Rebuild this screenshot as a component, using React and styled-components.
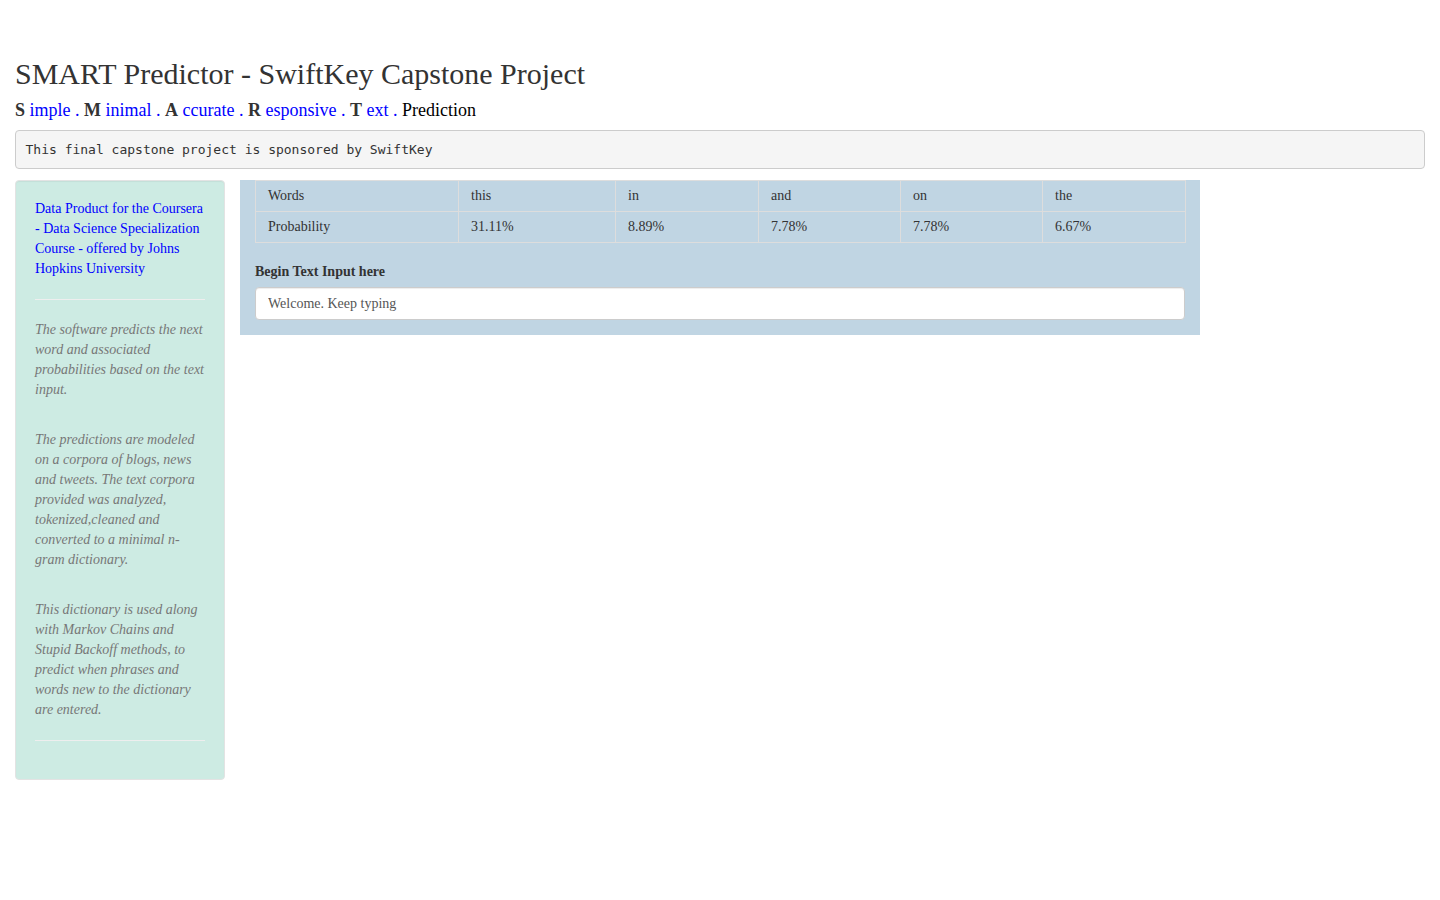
import React from 'react';
import styled, { createGlobalStyle } from 'styled-components';

const GlobalStyle = createGlobalStyle`
	* {
		box-sizing: border-box;
	}
	body {
		margin: 0;
		background: #fff;
		font-family: 'Liberation Serif', 'Times New Roman', serif;
		font-size: 14px;
		line-height: 20px;
		color: #333;
	}
`;

const Page = styled.div`
	padding: 37px 15px 0;
`;

const Title = styled.h2`
	margin: 20px 0 10px;
	font-size: 30px;
	font-weight: 400;
	line-height: 33px;
	color: #333;
`;

const Tagline = styled.div`
	font-size: 18px;
	line-height: 20px;
	color: #000;
	margin-bottom: 10px;
`;

const Initial = styled.b`
	color: #333;
`;

const Blue = styled.span`
	color: #0000ff;
`;

const Sponsor = styled.pre`
	margin: 0 0 11px;
	padding: 9.5px;
	font-family: 'DejaVu Sans Mono', 'Liberation Mono', monospace;
	font-size: 13px;
	line-height: 18px;
	color: #333;
	background: #f5f5f5;
	border: 1px solid #ccc;
	border-radius: 4px;
`;

const Row = styled.div`
	display: grid;
	grid-template-columns: 210px 960px;
	column-gap: 15px;
	align-items: start;
`;

const Sidebar = styled.div`
	background: #cdebe3;
	border: 1px solid #e3e3e3;
	border-radius: 4px;
	padding: 18px 19px 19px;
	box-shadow: inset 0 1px 1px rgba(0, 0, 0, 0.05);
`;

const SideLink = styled.a`
	display: block;
	color: #0000ff;
	text-decoration: none;
`;

const Rule = styled.hr`
	border: 0;
	border-top: 1px solid #eee;
	margin: ${(props) => props.margin || '20px 0'};
`;

const Note = styled.p`
	margin: 0 0 ${(props) => props.gap || '30px'};
	font-style: italic;
	color: #777;
`;

const Main = styled.div`
	background: #c0d5e3;
	padding: 0 15px 15px;
`;

const Table = styled.table`
	width: 100%;
	border-collapse: collapse;
	margin-bottom: 19px;
	table-layout: fixed;
`;

const Cell = styled.td`
	border: 1px solid #ddd;
	padding: 5px 12px;
	line-height: 20px;
	color: #333;
	width: ${(props) => props.width || 'auto'};
`;

const Label = styled.label`
	display: block;
	font-weight: 700;
	margin-bottom: 5px;
	color: #333;
`;

const TextInput = styled.input`
	display: block;
	width: 100%;
	height: 33px;
	padding: 6px 12px;
	font-family: inherit;
	font-size: 14px;
	color: #555;
	background: #fff;
	border: 1px solid #ccc;
	border-radius: 4px;
	box-shadow: inset 0 1px 1px rgba(0, 0, 0, 0.075);
	outline: none;
`;

const words = ['this', 'in', 'and', 'on', 'the'];
const probs = ['31.11%', '8.89%', '7.78%', '7.78%', '6.67%'];
const widths = ['157px', '143px', '142px', '142px', '143px'];

const tagParts = [
	['S', 'imple'],
	['M', 'inimal'],
	['A', 'ccurate'],
	['R', 'esponsive'],
	['T', 'ext'],
];

const App = () => {
	return (
		<Page>
			<GlobalStyle />
			<Title>SMART Predictor - SwiftKey Capstone Project</Title>
			<Tagline>
				{tagParts.map(([a, b]) => (
					<React.Fragment key={a}>
						<Initial>{a}</Initial>
						<Blue> {b} . </Blue>
					</React.Fragment>
				))}
				Prediction
			</Tagline>
			<Sponsor>This final capstone project is sponsored by SwiftKey</Sponsor>
			<Row>
				<Sidebar>
					<SideLink href='#'>
						Data Product for the Coursera - Data Science Specialization Course - offered by Johns Hopkins University
					</SideLink>
					<Rule />
					<Note>
						The software predicts the next word and associated probabilities based on the text input.
					</Note>
					<Note>
						The predictions are modeled on a corpora of blogs, news and tweets. The text corpora provided was
						analyzed, tokenized,cleaned and converted to a minimal n-gram dictionary.
					</Note>
					<Note gap='0'>
						This dictionary is used along with Markov Chains and Stupid Backoff methods, to predict when phrases
						and words new to the dictionary are entered.
					</Note>
					<Rule margin='20px 0 19px' />
				</Sidebar>
				<Main>
					<Table>
						<tbody>
							<tr>
								<Cell width='203px'>Words</Cell>
								{words.map((w, i) => (
									<Cell key={w} width={widths[i]}>
										{w}
									</Cell>
								))}
							</tr>
							<tr>
								<Cell>Probability</Cell>
								{probs.map((p, i) => (
									<Cell key={i}>{p}</Cell>
								))}
							</tr>
						</tbody>
					</Table>
					<Label htmlFor='text'>Begin Text Input here</Label>
					<TextInput id='text' type='text' defaultValue='Welcome. Keep typing' />
				</Main>
			</Row>
		</Page>
	);
};

export default App;
